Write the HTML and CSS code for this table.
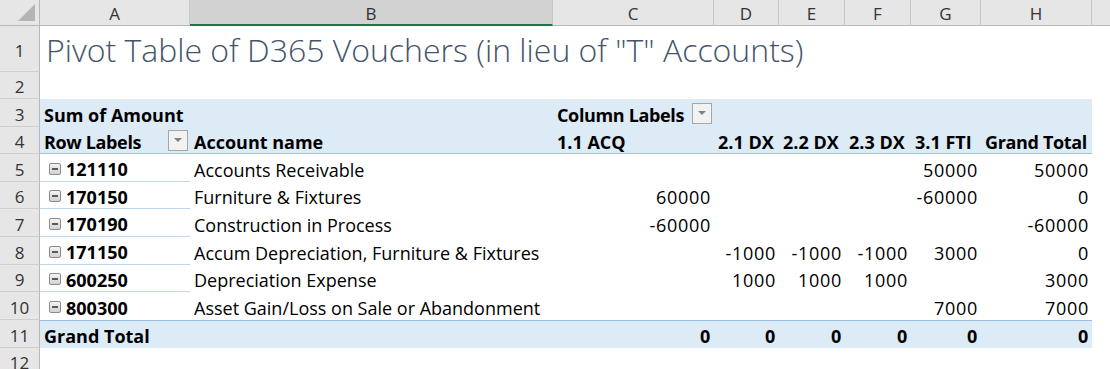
FILE: index.html
```html
<!DOCTYPE html>
<html>
<head>
<meta charset="utf-8">
<link rel="stylesheet" href="styles.css">
</head>
<body>
<div class="sheet">
  <!-- column header row -->
  <div class="corner"><span class="tri"></span></div>
  <div class="colh">A</div>
  <div class="colh sel">B</div>
  <div class="colh">C</div>
  <div class="colh">D</div>
  <div class="colh">E</div>
  <div class="colh">F</div>
  <div class="colh">G</div>
  <div class="colh">H</div>
  <div class="colh last"></div>

  <!-- row 1 -->
  <div class="rowh">1</div>
  <div class="title">Pivot Table of D365 Vouchers (in lieu of "T" Accounts)</div>

  <!-- row 2 -->
  <div class="rowh">2</div>
  <div class="blank full"></div>

  <!-- row 3 -->
  <div class="rowh">3</div>
  <div class="c hd b span2">Sum of Amount</div>
  <div class="c hd b flt tight">Column Labels <span class="fbtn"><span class="arr"></span></span></div>
  <div class="c hd"></div>
  <div class="c hd"></div>
  <div class="c hd"></div>
  <div class="c hd"></div>
  <div class="c hd"></div>
  <div class="blank"></div>

  <!-- row 4 -->
  <div class="rowh">4</div>
  <div class="c hd hb b flt tight">Row Labels <span class="fbtn"><span class="arr"></span></span></div>
  <div class="c hd hb b">Account name</div>
  <div class="c hd hb b">1.1 ACQ</div>
  <div class="c hd hb b">2.1 DX</div>
  <div class="c hd hb b">2.2 DX</div>
  <div class="c hd hb b">2.3 DX</div>
  <div class="c hd hb b">3.1 FTI</div>
  <div class="c hd hb b tight">Grand Total</div>
  <div class="blank"></div>

  <!-- row 5 -->
  <div class="rowh">5</div>
  <div class="c lab ln"><span class="exp"></span>121110</div>
  <div class="c">Accounts Receivable</div>
  <div class="c n"></div><div class="c n"></div><div class="c n"></div><div class="c n"></div>
  <div class="c n">50000</div><div class="c n">50000</div>
  <div class="blank"></div>

  <!-- row 6 -->
  <div class="rowh">6</div>
  <div class="c lab ln"><span class="exp"></span>170150</div>
  <div class="c">Furniture &amp; Fixtures</div>
  <div class="c n">60000</div><div class="c n"></div><div class="c n"></div><div class="c n"></div>
  <div class="c n">-60000</div><div class="c n">0</div>
  <div class="blank"></div>

  <!-- row 7 -->
  <div class="rowh">7</div>
  <div class="c lab ln"><span class="exp"></span>170190</div>
  <div class="c">Construction in Process</div>
  <div class="c n">-60000</div><div class="c n"></div><div class="c n"></div><div class="c n"></div>
  <div class="c n"></div><div class="c n">-60000</div>
  <div class="blank"></div>

  <!-- row 8 -->
  <div class="rowh">8</div>
  <div class="c lab ln"><span class="exp"></span>171150</div>
  <div class="c">Accum Depreciation, Furniture &amp; Fixtures</div>
  <div class="c n"></div><div class="c n">-1000</div><div class="c n">-1000</div><div class="c n">-1000</div>
  <div class="c n">3000</div><div class="c n">0</div>
  <div class="blank"></div>

  <!-- row 9 -->
  <div class="rowh">9</div>
  <div class="c lab ln"><span class="exp"></span>600250</div>
  <div class="c">Depreciation Expense</div>
  <div class="c n"></div><div class="c n">1000</div><div class="c n">1000</div><div class="c n">1000</div>
  <div class="c n"></div><div class="c n">3000</div>
  <div class="blank"></div>

  <!-- row 10 -->
  <div class="rowh">10</div>
  <div class="c lab"><span class="exp"></span>800300</div>
  <div class="c">Asset Gain/Loss on Sale or Abandonment</div>
  <div class="c n"></div><div class="c n"></div><div class="c n"></div><div class="c n"></div>
  <div class="c n">7000</div><div class="c n">7000</div>
  <div class="blank"></div>

  <!-- row 11 -->
  <div class="rowh">11</div>
  <div class="c hd ht b">Grand Total</div>
  <div class="c hd ht"></div>
  <div class="c hd ht n b">0</div>
  <div class="c hd ht n b">0</div>
  <div class="c hd ht n b">0</div>
  <div class="c hd ht n b">0</div>
  <div class="c hd ht n b">0</div>
  <div class="c hd ht n b">0</div>
  <div class="blank"></div>

  <!-- row 12 -->
  <div class="rowh">12</div>
  <div class="blank full"></div>
</div>
</body>
</html>
```

FILE: styles.css
```css
html, body {
  margin: 0;
  padding: 0;
  background: #ffffff;
}

.sheet {
  width: 1110px;
  height: 369px;
  overflow: hidden;
  display: grid;
  grid-template-columns: 40px 150px 363px 161px 65px 66px 66px 70px 111px 1fr;
  grid-template-rows: 26px 46px 27px 28px 27px 28px 27px 28px 28px 27px 28px 28px 27px;
  font-family: "Open Sans", "Noto Sans", "DejaVu Sans", sans-serif;
  font-size: 18px;
  color: #000000;
}

.corner {
  background: #e6e6e6;
  border-right: 1px solid #b8b8b8;
  border-bottom: 1px solid #b8b8b8;
  box-sizing: border-box;
  position: relative;
}

.tri {
  position: absolute;
  right: 4px;
  bottom: 4px;
  width: 0;
  height: 0;
  border-left: 17px solid transparent;
  border-bottom: 17px solid #b4b4b4;
}

.colh {
  background: #e6e6e6;
  border-right: 1px solid #c8c8c8;
  border-bottom: 1px solid #b8b8b8;
  box-sizing: border-box;
  display: flex;
  align-items: center;
  justify-content: center;
  font-family: "Open Sans", "Noto Sans", sans-serif;
  font-size: 17px;
  color: #333333;
  padding-top: 1px;
}

.colh.sel {
  background: #d2d2d2;
  border-bottom: 2px solid #217346;
  padding-top: 2px;
}

.colh.last {
  border-right: none;
}

.rowh {
  grid-column: 1;
  background: #e6e6e6;
  border-right: 1px solid #b8b8b8;
  border-bottom: 1px solid #cfcfcf;
  box-sizing: border-box;
  display: flex;
  align-items: center;
  justify-content: center;
  font-family: "Open Sans", "Noto Sans", sans-serif;
  font-size: 17px;
  color: #333333;
  padding-top: 3px;
}

.title {
  grid-column: 2 / -1;
  display: flex;
  align-items: flex-end;
  padding-left: 6px;
  padding-bottom: 2px;
  font-family: "Open Sans", "Noto Sans", sans-serif;
  font-weight: 300;
  font-size: 32px;
  line-height: 40px;
  color: #44546a;
  white-space: nowrap;
}

.blank {
  background: #ffffff;
}

.blank.full {
  grid-column: 2 / -1;
}

.c {
  box-sizing: border-box;
  display: flex;
  align-items: center;
  padding: 3px 4px 0 4px;
  white-space: nowrap;
  overflow: visible;
  min-width: 0;
}

.c.span2 {
  grid-column: span 2;
}

.c.b {
  font-weight: 700;
}

.c.tight {
  letter-spacing: -0.35px;
}

.c.hd {
  background: #ddebf7;
}

.c.hb {
  border-bottom: 1px solid #9bc2e6;
}

.c.ht {
  border-top: 1px solid #9bc2e6;
}

.c.n {
  justify-content: flex-end;
  letter-spacing: 0.7px;
  padding-right: 3px;
}

.c.flt {
  justify-content: space-between;
  padding-right: 2px;
}

.fbtn {
  width: 20px;
  height: 21px;
  box-sizing: border-box;
  border: 1px solid #a6a6a6;
  background: #f2f2f2;
  display: flex;
  align-items: center;
  justify-content: center;
  margin-top: -3px;
}

.arr {
  width: 0;
  height: 0;
  border-left: 4px solid transparent;
  border-right: 4px solid transparent;
  border-top: 4px solid #808080;
}

.c.lab {
  font-weight: 700;
  padding-left: 9px;
}

.c.ln {
  border-bottom: 1px solid #bdd7ee;
}

.exp {
  width: 12px;
  height: 12px;
  box-sizing: border-box;
  border: 1px solid #8c8c8c;
  border-radius: 2px;
  background: linear-gradient(#f4f4f4, #d2d2d2);
  margin-right: 5px;
  margin-top: -1px;
  position: relative;
  flex: none;
}

.exp::after {
  content: "";
  position: absolute;
  left: 2px;
  right: 2px;
  top: 4px;
  height: 2px;
  background: #595959;
}
```
